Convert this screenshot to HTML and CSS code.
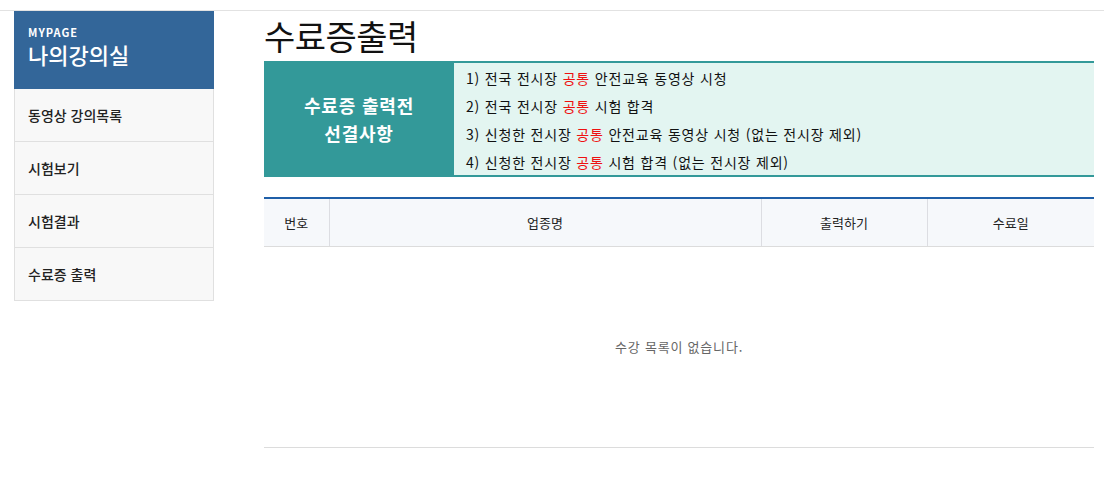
FILE: index.html
```html
<!DOCTYPE html>
<html lang="ko">
<head>
<meta charset="utf-8">
<title>수료증출력</title>
<link rel="stylesheet" href="styles.css">
</head>
<body>
<div class="topbar"></div>
<div class="wrap">
  <aside class="side">
    <div class="side-head">
      <div class="side-sub">MYPAGE</div>
      <div class="side-title">나의강의실</div>
    </div>
    <ul class="menu">
      <li class="menu-item">동영상 강의목록</li>
      <li class="menu-item">시험보기</li>
      <li class="menu-item">시험결과</li>
      <li class="menu-item">수료증 출력</li>
    </ul>
  </aside>
  <main class="main">
    <h1 class="page-title">수료증출력</h1>
    <div class="notice">
      <div class="notice-head">수료증 출력전<br>선결사항</div>
      <ul class="notice-list">
        <li>1) 전국 전시장 <span class="red">공통</span> 안전교육 동영상 시청</li>
        <li>2) 전국 전시장 <span class="red">공통</span> 시험 합격</li>
        <li>3) 신청한 전시장 <span class="red">공통</span> 안전교육 동영상 시청 (없는 전시장 제외)</li>
        <li>4) 신청한 전시장 <span class="red">공통</span> 시험 합격 (없는 전시장 제외)</li>
      </ul>
    </div>
    <table class="list">
      <thead>
        <tr>
          <th class="c-no">번호</th>
          <th class="c-name">업종명</th>
          <th class="c-print">출력하기</th>
          <th class="c-date">수료일</th>
        </tr>
      </thead>
      <tbody>
        <tr><td class="empty" colspan="4">수강 목록이 없습니다.</td></tr>
      </tbody>
    </table>
  </main>
</div>
</body>
</html>
```

FILE: styles.css
```css
* { box-sizing: border-box; }
html, body { margin: 0; padding: 0; background: #fff; }
body {
  font-family: "Noto Sans CJK KR", "Noto Sans", "Liberation Sans", sans-serif;
  color: #222;
  font-size: 13px;
}
.topbar { height: 11px; border-bottom: 1px solid #e2e2e2; }
.wrap { display: flex; padding-left: 14px; gap: 50px; }
.side { width: 200px; flex: none; }
.side-head {
  background: #336699;
  color: #fff;
  height: 78px;
  padding: 14px 0 0 14px;
}
.side-sub { font-size: 11px; font-weight: 700; line-height: 14px; letter-spacing: 1px; }
.side-title { font-size: 22px; font-weight: 500; line-height: 28px; margin-top: 1px; letter-spacing: 0; }
.menu { list-style: none; margin: 0; padding: 0; border-left: 1px solid #e0e0e0; border-right: 1px solid #e0e0e0; }
.menu-item {
  height: 53px;
  line-height: 52px;
  padding-left: 13px;
  background: #f8f8f8;
  border-bottom: 1px solid #e0e0e0;
  font-size: 14px;
  font-weight: 500;
  color: #222;
}
.main { width: 830px; flex: none; }
.page-title {
  margin: 0;
  height: 50px;
  font-size: 34px;
  font-weight: 400;
  line-height: 50px;
  color: #111;
  letter-spacing: -0.5px;
}
.notice { display: flex; height: 116px; }
.notice-head {
  width: 190px;
  flex: none;
  background: #339999;
  color: #fff;
  font-size: 18px;
  font-weight: 700;
  line-height: 28px;
  letter-spacing: 0.8px;
  text-align: center;
  display: flex;
  align-items: center;
  justify-content: center;
}
.notice-list {
  flex: 1;
  list-style: none;
  margin: 0;
  padding: 1px 0 0 12px;
  background: #e3f5f1;
  border-top: 2px solid #339999;
  border-bottom: 2px solid #339999;
}
.notice-list li { line-height: 28px; font-size: 14px; letter-spacing: 0.8px; color: #111; }
.red { color: #ee1111; }
.list {
  width: 100%;
  margin-top: 20px;
  border-collapse: collapse;
  border-top: 2px solid #1f5fa8;
}
.list th {
  height: 48px;
  background: #f6f8fb;
  font-weight: 400;
  font-size: 13px;
  color: #222;
  border-bottom: 1px solid #dcdcdc;
  border-left: 1px solid #dcdde2;
}
.list th:first-child { border-left: none; }
.c-no { width: 65px; }
.c-name { width: 432px; }
.c-print { width: 166px; }
.empty {
  height: 201px;
  text-align: center;
  font-size: 13px;
  letter-spacing: 0.8px;
  color: #666;
  border-bottom: 1px solid #dcdcdc;
}
```
